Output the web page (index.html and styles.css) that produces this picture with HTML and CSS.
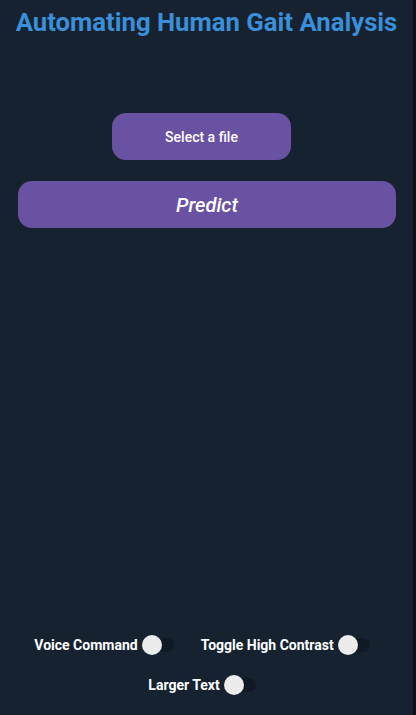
FILE: index.html
```html
<!DOCTYPE html>
<html>
<head>
<meta charset="utf-8">
<link rel="stylesheet" href="styles.css">
</head>
<body>
<div class="app">
  <h1 class="title">Automating Human Gait Analysis</h1>
  <div class="upload">
    <button class="btn select">Select a file</button>
  </div>
  <button class="btn predict">Predict</button>
  <div class="spacer"></div>
  <div class="footer">
    <div class="row">
      <label class="toggle"><span class="label">Voice Command</span><span class="switch"><span class="thumb"></span></span></label>
      <label class="toggle"><span class="label">Toggle High Contrast</span><span class="switch"><span class="thumb"></span></span></label>
    </div>
    <div class="row">
      <label class="toggle"><span class="label">Larger Text</span><span class="switch"><span class="thumb"></span></span></label>
    </div>
  </div>
</div>
</body>
</html>
```
FILE: styles.css
```css
html, body {
  margin: 0;
  padding: 0;
  background: #0e1116;
}
body {
  width: 416px;
  height: 715px;
  overflow: hidden;
  font-family: Roboto, "Liberation Sans", sans-serif;
}
.app {
  width: 413px;
  height: 715px;
  background: #16222f;
  display: flex;
  flex-direction: column;
  box-sizing: border-box;
}
.title {
  margin: 6px 0 0 0;
  text-align: center;
  color: #3a8fd8;
  font-size: 25.7px;
  font-weight: 700;
  line-height: 32px;
}
.upload {
  display: flex;
  justify-content: center;
  padding-right: 10px;
  margin-top: 75px;
}
.btn {
  border: none;
  background: #6a52a3;
  color: #fff;
  font-family: Roboto, "Liberation Sans", sans-serif;
  border-radius: 14px;
  height: 47px;
  padding: 0;
}
.select {
  width: 179px;
  font-size: 14px;
  font-weight: 500;
}
.predict {
  margin: 21px 17px 0 18px;
  font-size: 20px;
  font-weight: 500;
  font-style: italic;
}
.spacer { flex: 1; }
.footer {
  display: flex;
  flex-direction: column;
  gap: 18px;
  padding-right: 9px;
  margin-bottom: 19px;
}
.row {
  display: flex;
  justify-content: center;
  gap: 27px;
}
.toggle {
  display: flex;
  align-items: center;
  height: 22px;
}
.label {
  color: #fff;
  font-size: 14px;
  font-weight: 700;
}
.switch {
  position: relative;
  width: 32px;
  height: 14px;
  margin-left: 4px;
  border-radius: 7px;
  background: #101a24;
}
.thumb {
  position: absolute;
  left: 0;
  top: -3px;
  width: 20px;
  height: 20px;
  border-radius: 50%;
  background: #ececec;
}
```
